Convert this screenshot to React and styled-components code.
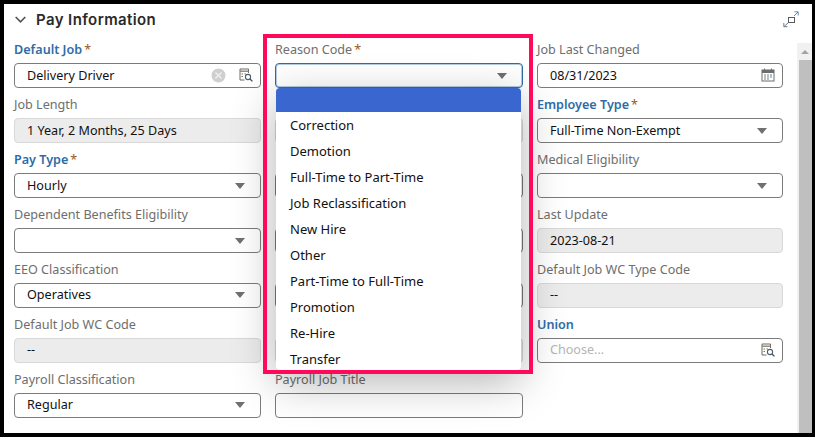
import React from 'react';
import styled, { createGlobalStyle } from 'styled-components';

const GlobalStyle = createGlobalStyle`
  html, body { margin: 0; padding: 0; background: #000; }
  * { box-sizing: border-box; }
`;

const leftFields = [
  { label: 'Default Job', strong: true, req: true, value: 'Delivery Driver', kind: 'lookup', clear: true },
  { label: 'Job Length', value: '1 Year, 2 Months, 25 Days', kind: 'off' },
  { label: 'Pay Type', strong: true, req: true, value: 'Hourly', kind: 'select' },
  { label: 'Dependent Benefits Eligibility', value: '', kind: 'select' },
  { label: 'EEO Classification', value: 'Operatives', kind: 'select' },
  { label: 'Default Job WC Code', value: '--', kind: 'off' },
  { label: 'Payroll Classification', value: 'Regular', kind: 'select' },
];

const middleFields = [
  { label: 'Reason Code', req: true, value: '', kind: 'select', focus: true },
  { label: '', value: '', kind: 'off' },
  { label: '', value: '', kind: 'select' },
  { label: '', value: '', kind: 'select' },
  { label: '', value: '', kind: 'select' },
  { label: '', value: '', kind: 'off' },
  { label: 'Payroll Job Title', value: '', kind: 'blank' },
];

const rightFields = [
  { label: 'Job Last Changed', value: '08/31/2023', kind: 'date' },
  { label: 'Employee Type', strong: true, req: true, value: 'Full-Time Non-Exempt', kind: 'select' },
  { label: 'Medical Eligibility', value: '', kind: 'select' },
  { label: 'Last Update', value: '2023-08-21', kind: 'off' },
  { label: 'Default Job WC Type Code', value: '--', kind: 'off' },
  { label: 'Union', strong: true, placeholder: 'Choose...', kind: 'lookup' },
];

const reasonCodes = [
  'Correction',
  'Demotion',
  'Full-Time to Part-Time',
  'Job Reclassification',
  'New Hire',
  'Other',
  'Part-Time to Full-Time',
  'Promotion',
  'Re-Hire',
  'Transfer',
];

const LookupIcon = () => (
  <svg width="14" height="14" viewBox="0 0 14 14" fill="none">
    <path d="M9.5 5V1H1v11h4.5" stroke="#6f6a60" strokeWidth="1" />
    <path d="M1 3.2h8.5" stroke="#8a8578" strokeWidth="1.4" />
    <path d="M2.5 6h1.5M5.5 6h1.5M2.5 8.5h1.5" stroke="#77726a" strokeWidth="1.2" />
    <circle cx="9" cy="9" r="2.6" stroke="#4d5f70" strokeWidth="1.1" />
    <path d="M11 11l2.4 2.4" stroke="#3c4f60" strokeWidth="1.3" />
  </svg>
);

const CalendarIcon = () => (
  <svg width="14" height="14" viewBox="0 0 14 14" fill="none">
    <rect x="1" y="2" width="12" height="11" stroke="#6c6c6c" />
    <rect x="1" y="2" width="12" height="3" fill="#6c6c6c" />
    <path d="M3.5 0.5v2.5M10.5 0.5v2.5" stroke="#6c6c6c" />
    <path d="M3 7h2M6 7h2M9 7h2M3 9h2M6 9h2M9 9h2M3 11h2M6 11h2" stroke="#6f7f90" />
  </svg>
);

const ClearIcon = () => (
  <svg width="15" height="15" viewBox="0 0 15 15">
    <circle cx="7.5" cy="7.5" r="7" fill="#cfcfcf" />
    <path d="M4.4 4.4l6.2 6.2M10.6 4.4l-6.2 6.2" stroke="#efefef" strokeWidth="1.4" />
  </svg>
);

const ExpandIcon = () => (
  <svg width="17" height="17" viewBox="0 0 17 17" fill="none">
    <rect x="6.5" y="6.5" width="6" height="5" stroke="#5c5c5c" />
    <path d="M12 5L16 1M12.5 0.8h3.7v3.7" stroke="#6b8aa8" />
    <path d="M6 12L2 15.5M1.8 12v3.7h3.7" stroke="#6b7f90" />
  </svg>
);

const Chevron = () => (
  <svg width="11" height="7" viewBox="0 0 11 7" fill="none">
    <path d="M0.7 1l4.8 4.8L10.3 1" stroke="#555" strokeWidth="1.7" />
  </svg>
);

const FieldBlock = ({ field }) => {
  const { label, strong, req, value, kind, clear, focus, placeholder } = field;
  return (
    <Field>
      <FieldLabel $strong={strong}>
        {label}
        {req && <Star>*</Star>}
      </FieldLabel>
      <Control $kind={kind} $focus={focus}>
        <ControlText $muted={!!placeholder}>{placeholder || value}</ControlText>
        {clear && <ClearSlot><ClearIcon /></ClearSlot>}
        {kind === 'lookup' && <IconSlot><LookupIcon /></IconSlot>}
        {kind === 'date' && <IconSlot><CalendarIcon /></IconSlot>}
        {kind === 'select' && <Caret />}
      </Control>
    </Field>
  );
};

export default function App() {
  return (
    <>
      <GlobalStyle />
      <Frame>
        <Header>
          <Chevron />
          <Title>Pay Information</Title>
          <ExpandButton><ExpandIcon /></ExpandButton>
        </Header>
        <Body>
          <FormGrid>
            <Column>{leftFields.map((f) => <FieldBlock key={f.label} field={f} />)}</Column>
            <Column>{middleFields.map((f, i) => <FieldBlock key={i} field={f} />)}</Column>
            <Column>{rightFields.map((f) => <FieldBlock key={f.label} field={f} />)}</Column>
          </FormGrid>
          <Scrollbar>
            <ScrollArrow />
            <ScrollThumb />
          </Scrollbar>
        </Body>
        <Dropdown>
          <Selected />
          {reasonCodes.map((r) => <Option key={r}>{r}</Option>)}
        </Dropdown>
        <Highlight />
      </Frame>
    </>
  );
}

const Frame = styled.div`
  position: relative;
  width: 815px;
  height: 437px;
  border-style: solid;
  border-color: #000;
  border-width: 4px 3px 4px 4px;
  background: #fff;
  overflow: hidden;
  font-family: "Noto Sans", "Open Sans", sans-serif;
`;

const Header = styled.div`
  height: 37px;
  display: flex;
  align-items: center;
  padding: 0 13px 6px 11px;
`;

const Title = styled.h2`
  margin: 0 0 0 10px;
  font-family: Inter, "Noto Sans", sans-serif;
  font-size: 15px;
  font-weight: 600;
  letter-spacing: 0.4px;
  color: #2a2a2a;
`;

const ExpandButton = styled.div`
  margin-left: auto;
  align-self: flex-start;
  margin-top: 7px;
  display: flex;
`;

const Body = styled.div`
  display: flex;
  justify-content: space-between;
  padding-left: 10px;
  height: 392px;
`;

const FormGrid = styled.div`
  display: grid;
  grid-template-columns: 247px 248px 246px;
  column-gap: 14px;
  align-content: start;
  padding-top: 0.35px;
`;

const Column = styled.div`
  display: flex;
  flex-direction: column;
`;

const Field = styled.div`
  height: 54.9px;
`;

const FieldLabel = styled.div`
  height: 17px;
  margin-bottom: 5px;
  font-size: 12.6px;
  line-height: 17px;
  white-space: nowrap;
  font-weight: ${(p) => (p.$strong ? 600 : 400)};
  color: ${(p) => (p.$strong ? '#2f6ca6' : '#6e6e6e')};
`;

const Star = styled.span`
  margin-left: 2px;
  color: #9a5a22;
  font-weight: 400;
`;

const Control = styled.div`
  position: relative;
  height: 25px;
  display: flex;
  align-items: center;
  padding-left: 12px;
  border-radius: 4px;
  border: 1px solid ${(p) => {
    if (p.$focus) return '#2f6ca6';
    return p.$kind === 'off' ? '#d8d8d8' : '#7b7b7b';
  }};
  box-shadow: ${(p) => (p.$focus ? 'inset 0 0 0 1px rgba(47,108,166,.35)' : 'none')};
  background: ${(p) => (p.$kind === 'off' ? '#ececec' : '#fff')};
`;

const ControlText = styled.span`
  font-size: 12.6px;
  line-height: 18px;
  color: ${(p) => (p.$muted ? '#b5b5b5' : '#111')};
`;

const IconSlot = styled.span`
  margin-left: auto;
  margin-right: 7px;
  margin-bottom: 1px;
  display: flex;
`;

const ClearSlot = styled.span`
  position: absolute;
  right: 34px;
  top: 4px;
  display: flex;
`;

const Caret = styled.span`
  margin-left: auto;
  margin-right: 15px;
  width: 0;
  height: 0;
  border-left: 5px solid transparent;
  border-right: 5px solid transparent;
  border-top: 6px solid #707070;
`;

const Scrollbar = styled.div`
  width: 15px;
  margin-top: 2px;
  background: #f1f1f1;
  display: flex;
  flex-direction: column;
  align-items: flex-end;
`;

const ScrollArrow = styled.div`
  width: 15px;
  height: 17px;
  display: flex;
  align-items: center;
  justify-content: center;
  &::before {
    content: '';
    border-left: 4px solid transparent;
    border-right: 4px solid transparent;
    border-bottom: 4px solid #a3a3a3;
  }
`;

const ScrollThumb = styled.div`
  width: 13px;
  flex: 1;
  background: #bfbfbf;
`;

const Dropdown = styled.div`
  position: absolute;
  left: 272px;
  top: 84px;
  width: 245px;
  height: 282px;
  overflow: hidden;
  background: #fff;
  border-radius: 4px;
  box-shadow: 0 12px 44px rgba(0, 0, 0, 0.3);
`;

const Selected = styled.div`
  height: 24px;
  background: #3a66cf;
`;

const Option = styled.div`
  height: 26px;
  padding-left: 14px;
  font-size: 13px;
  line-height: 26px;
  color: #111;
`;

const Highlight = styled.div`
  position: absolute;
  left: 259px;
  top: 30px;
  width: 270px;
  height: 340px;
  border: 4px solid #ff0a5a;
  pointer-events: none;
`;
